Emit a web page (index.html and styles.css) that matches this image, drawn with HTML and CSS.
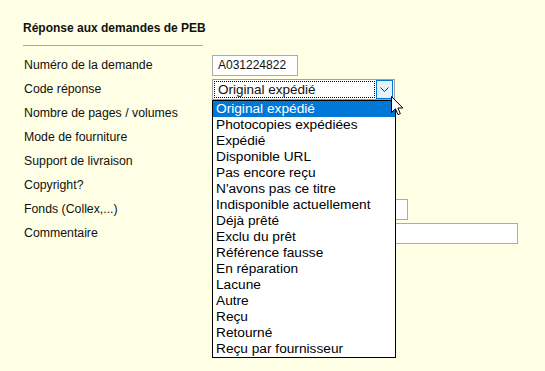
FILE: index.html
```html
<!DOCTYPE html>
<html lang="fr">
<head>
<meta charset="utf-8">
<title>Réponse aux demandes de PEB</title>
<link rel="stylesheet" href="styles.css">
</head>
<body>
<div class="page">
  <div class="heading"><h2>Réponse aux demandes de PEB</h2></div>
  <div class="form">
    <div class="label">Numéro de la demande</div>
    <div class="cell"><div class="input input-short">A031224822</div></div>

    <div class="label">Code réponse</div>
    <div class="cell">
      <div class="select-wrap">
        <div class="select">
          <div class="select-value">Original expédié</div>
          <div class="select-btn">
            <svg width="9" height="5" viewBox="0 0 9 5"><path d="M0.5 0.5 L4.5 4.5 L8.5 0.5" fill="none" stroke="#333" stroke-width="1"/></svg>
          </div>
        </div>
        <ul class="list">
          <li class="selected">Original expédié</li>
          <li>Photocopies expédiées</li>
          <li>Expédié</li>
          <li>Disponible URL</li>
          <li>Pas encore reçu</li>
          <li>N'avons pas ce titre</li>
          <li>Indisponible actuellement</li>
          <li>Déjà prêté</li>
          <li>Exclu du prêt</li>
          <li>Référence fausse</li>
          <li>En réparation</li>
          <li>Lacune</li>
          <li>Autre</li>
          <li>Reçu</li>
          <li>Retourné</li>
          <li>Reçu par fournisseur</li>
        </ul>
        <svg class="cursor" width="13" height="20" viewBox="0 0 13 20"><path d="M0.5 0.5 L0.5 16.5 L4.5 12.8 L7 18.7 L9.3 17.7 L6.9 12 L11.8 12 Z" fill="#fff" stroke="#000" stroke-width="1" stroke-linejoin="miter"/></svg>
      </div>
    </div>

    <div class="label">Nombre de pages / volumes</div>
    <div class="cell"></div>

    <div class="label">Mode de fourniture</div>
    <div class="cell"></div>

    <div class="label">Support de livraison</div>
    <div class="cell"></div>

    <div class="label">Copyright?</div>
    <div class="cell"></div>

    <div class="label">Fonds (Collex,...)</div>
    <div class="cell"><div class="input input-mid"></div></div>

    <div class="label">Commentaire</div>
    <div class="cell"><div class="input input-long"></div></div>
  </div>
</div>
</body>
</html>
```

FILE: styles.css
```css
html, body {
  margin: 0;
  padding: 0;
  background: #ffffe6;
}
body {
  font-family: "Liberation Sans", Arial, sans-serif;
  color: #111;
}
.page {
  box-sizing: border-box;
  min-height: 371px;
  padding: 21px 0 0 23px;
}
.heading {
  width: 180px;
  padding-bottom: 10px;
  border-bottom: 1px solid #a8a8a0;
}
.heading h2 {
  margin: 0;
  font-size: 12px;
  line-height: 14px;
  font-weight: bold;
  white-space: nowrap;
}
.form {
  margin-top: 8px;
  display: grid;
  grid-template-columns: 189px auto;
  grid-auto-rows: 24px;
}
.label {
  font-size: 12.3px;
  line-height: 23px;
  padding-left: 1px;
  white-space: nowrap;
}
.cell {
  padding-top: 1px;
}
.input {
  box-sizing: border-box;
  height: 21px;
  background: #fff;
  border: 1px solid #ababab;
  font-size: 12px;
  line-height: 19px;
  padding-left: 5px;
}
.input-short { width: 86px; }
.input-mid { width: 196px; }
.input-long { width: 306px; }
.select-wrap {
  position: relative;
  width: 183px;
}
.select {
  box-sizing: border-box;
  height: 21px;
  width: 183px;
  background: #fff;
  border: 1px solid #a0a0a0;
  display: flex;
  align-items: stretch;
  padding: 1px;
}
.select-value {
  flex: 1;
  border: 1px dotted #000;
  font-size: 13.5px;
  line-height: 15px;
  padding-left: 3px;
  margin-right: 1px;
  white-space: nowrap;
}
.select-btn {
  box-sizing: border-box;
  width: 17px;
  margin: -1px 0;
  background: #e5f1fb;
  border: 1px solid #0078d7;
  display: flex;
  align-items: center;
  justify-content: center;
}
.list {
  position: absolute;
  left: 0;
  top: 21px;
  margin: 0;
  padding: 0;
  list-style: none;
  width: 184px;
  box-sizing: border-box;
  background: #fff;
  border: 1px solid #000;
  z-index: 2;
}
.list li {
  height: 16px;
  font-size: 13.7px;
  line-height: 16px;
  padding-left: 3px;
  white-space: nowrap;
  color: #000;
}
.list li.selected {
  background: #0078d7;
  color: #fff;
}
.cursor {
  position: absolute;
  left: 179px;
  top: 17px;
  z-index: 3;
}
```
